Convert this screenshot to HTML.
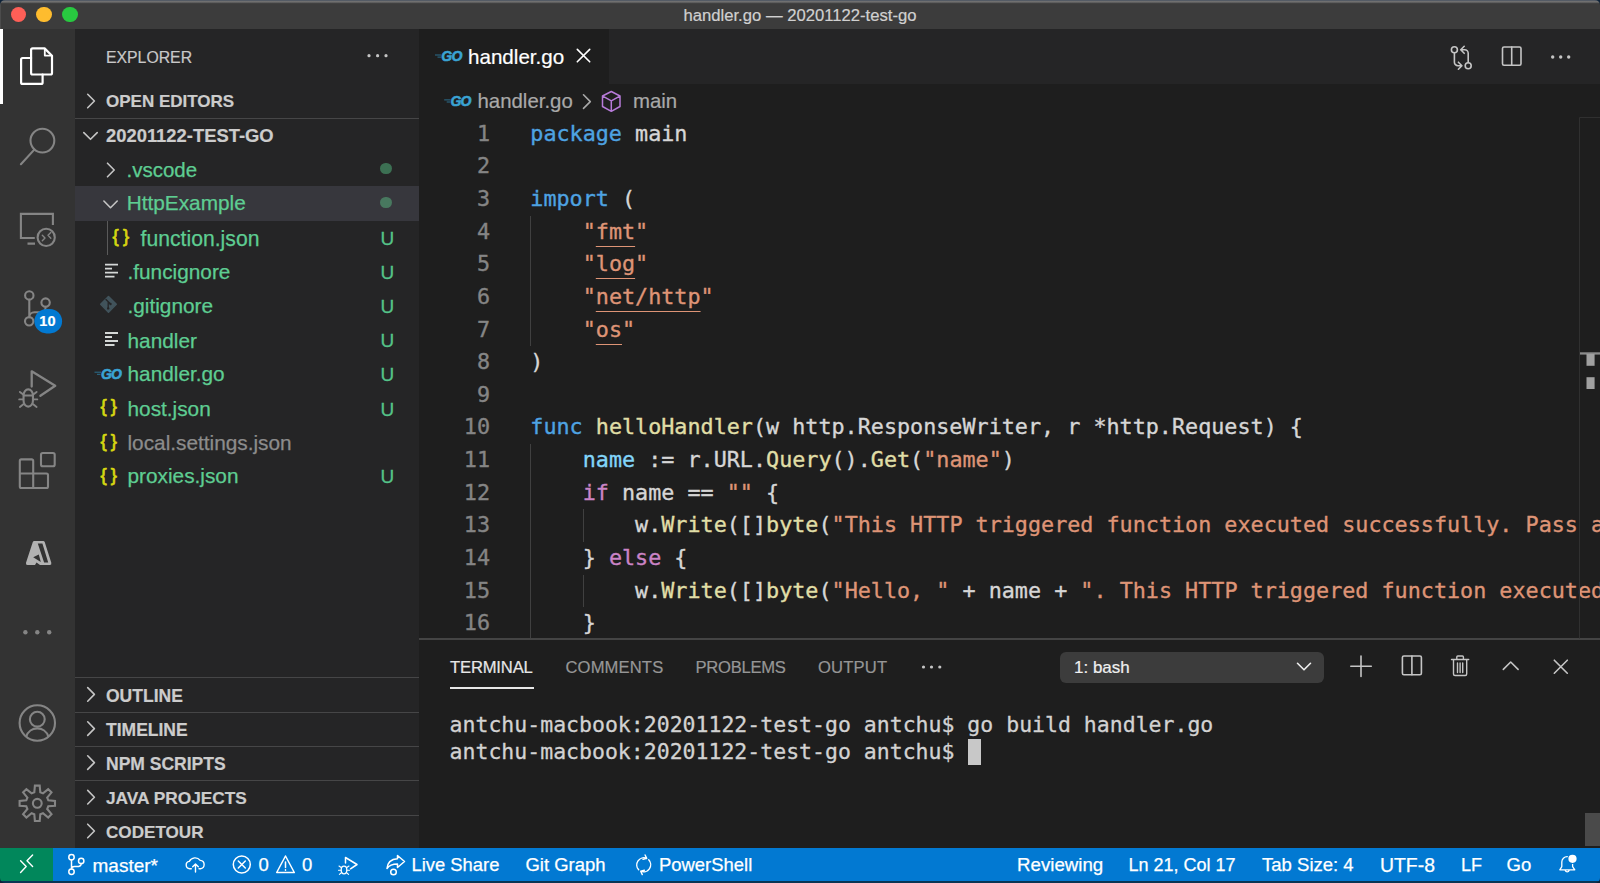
<!DOCTYPE html>
<html lang="en">
<head>
<meta charset="utf-8">
<title>handler.go — 20201122-test-go</title>
<style>
*{box-sizing:border-box;margin:0;padding:0}
html,body{width:1600px;height:883px;overflow:hidden;background:#1e1e1e}
body{position:relative;font-family:"Liberation Sans",sans-serif;color:#ccc;-webkit-font-smoothing:antialiased}
.abs{position:absolute}
.t{position:absolute;white-space:pre;line-height:1;-webkit-text-stroke:0.2px}
#titlebar{left:0;top:0;width:1600px;height:29px;background:linear-gradient(#545b65 0,#545b65 1px,#727272 1px,#6c6c6c 2.2px,#464646 3px,#3c3c3c 4px);border-left:1px solid #4c4c4c}
#title{left:0;width:1600px;text-align:center;top:7.6px;-webkit-text-stroke:0.2px;font-size:16.66px;color:#d0d0d0}
.light{position:absolute;top:6.8px;width:15.5px;height:15.5px;border-radius:50%}
#activity{left:0;top:29px;width:75px;height:819px;background:#333333}
#sidebar{left:75px;top:29px;width:344px;height:819px;background:#252526}
#tabs{left:419px;top:29px;width:1181px;height:54.5px;background:#252526}
#tab{left:419px;top:29px;width:190px;height:54.5px;background:#1e1e1e}
.sep{position:absolute;left:75px;width:344px;height:1.3px;background:#464647}
.sh{font-weight:bold;font-size:17.1px;color:#cccccc;left:106px}
.row{font-size:20.8px;color:#5ecd92;-webkit-text-stroke:0.25px}
.u{font-size:19px;color:#55c388;left:380.5px;-webkit-text-stroke:0.3px}
#status{left:0;top:848px;width:1600px;height:35px;background:#0279d2;border-bottom:2px solid #0a3554}
#remote{left:0;top:848px;width:53px;height:33px;background:#01875b}
.st{font-size:18.5px;color:#fff;top:855.5px;-webkit-text-stroke:0.25px}
.pt{font-size:16.6px;color:#969696;top:659.9px}
#code{left:0;top:117.7px;width:1600px;height:520.3px;overflow:hidden;font-family:"DejaVu Sans Mono","Liberation Mono",monospace;font-size:21.75px;line-height:32.64px;color:#d6d6d6;-webkit-text-stroke:0.35px}
#code div{position:absolute;white-space:pre;height:32.64px}
.ln{left:419px;width:71px;text-align:right;color:#858585}
.cl{left:530.3px}
.k{color:#4ea3e2}.s{color:#de9476}.f{color:#e0dea6}.v{color:#82d5f9}.c{color:#cb84c6}
.lk{text-decoration:underline;text-decoration-thickness:1.2px;text-underline-offset:6.5px}
.js{font-size:18.5px;color:#d6d611;letter-spacing:4.3px;-webkit-text-stroke:0.75px #d6d611}
.go{font-weight:bold;font-style:italic;font-size:14px;color:#3aa3d3;letter-spacing:-0.8px;-webkit-text-stroke:0.6px #3aa3d3}
.g{width:1px;background:#404040}
.term{font-family:"DejaVu Sans Mono","Liberation Mono",monospace;font-size:21.5px;color:#d2d2d2;left:449.6px;-webkit-text-stroke:0.3px}
</style>
</head>
<body>
<!-- title bar -->
<div id="titlebar" class="abs"></div>
<div class="light" style="left:10.5px;background:#fe5f57"></div>
<div class="light" style="left:36.3px;background:#febc2e"></div>
<div class="light" style="left:62.3px;background:#28c840"></div>
<div id="title" class="t">handler.go — 20201122-test-go</div>

<!-- activity bar / sidebar / editor backgrounds -->
<div id="activity" class="abs"></div>
<div class="abs" style="left:0;top:29px;width:3px;height:75px;background:#fff"></div>
<div id="sidebar" class="abs"></div>
<div id="tabs" class="abs"></div>
<div id="tab" class="abs"></div>

<!-- sidebar -->
<div class="t" style="left:106px;top:49.5px;font-size:15.8px;color:#c8c8c8">EXPLORER</div>
<div class="t sh" style="top:93px;font-size:17px">OPEN EDITORS</div>
<div class="sep" style="top:118px"></div>
<div class="t sh" style="top:126.6px;font-size:18.4px">20201122-TEST-GO</div>
<div class="abs" style="left:75px;top:186.4px;width:344px;height:34.4px;background:#37373d"></div>
<div class="abs" style="left:106.5px;top:221px;width:1px;height:33.6px;background:#5a5a5a"></div>

<div class="t row" style="left:126.5px;top:159.5px;font-size:20.5px">.vscode</div>
<div class="t row" style="left:126.7px;top:193.3px">HttpExample</div>
<div class="t row" style="left:140.5px;top:228.2px;font-size:21.2px">function.json</div>
<div class="t row" style="left:127.5px;top:261.8px">.funcignore</div>
<div class="t row" style="left:127.5px;top:295.7px">.gitignore</div>
<div class="t row" style="left:127.5px;top:330.5px">handler</div>
<div class="t row" style="left:127.5px;top:364.2px">handler.go</div>
<div class="t row" style="left:127.5px;top:398.8px">host.json</div>
<div class="t row" style="left:127.5px;top:432.9px;color:#8c8c8c">local.settings.json</div>
<div class="t row" style="left:127.5px;top:466.1px">proxies.json</div>

<div class="abs" style="left:380px;top:162.7px;width:11.5px;height:11.5px;border-radius:50%;background:#3c7053"></div>
<div class="abs" style="left:380px;top:196.5px;width:11.5px;height:11.5px;border-radius:50%;background:#48785f"></div>
<div class="t u" style="top:229.1px">U</div>
<div class="t u" style="top:262.7px">U</div>
<div class="t u" style="top:296.6px">U</div>
<div class="t u" style="top:331.4px">U</div>
<div class="t u" style="top:365.1px">U</div>
<div class="t u" style="top:399.7px">U</div>
<div class="t u" style="top:467px">U</div>

<div class="sep" style="top:677px"></div>
<div class="t sh" style="top:688px;font-size:17.5px">OUTLINE</div>
<div class="sep" style="top:711.5px"></div>
<div class="t sh" style="top:722px;font-size:17.5px">TIMELINE</div>
<div class="sep" style="top:746px"></div>
<div class="t sh" style="top:756.1px;font-size:17.5px">NPM SCRIPTS</div>
<div class="sep" style="top:780px"></div>
<div class="t sh" style="top:789.8px;font-size:17.3px">JAVA PROJECTS</div>
<div class="sep" style="top:814.5px"></div>
<div class="t sh" style="top:824px">CODETOUR</div>


<!-- file icons as text -->
<div class="t js" style="left:112.5px;top:226.6px">{}</div>
<div class="t js" style="left:100.4px;top:397.4px">{}</div>
<div class="t js" style="left:100.4px;top:431.8px">{}</div>
<div class="t js" style="left:100.4px;top:465.6px">{}</div>
<div class="t go" style="left:101px;top:366.6px">GO</div>
<div class="t go" style="left:441.3px;top:49.4px">GO</div>
<div class="t go" style="left:450.5px;top:94.3px">GO</div>
<div class="t" style="z-index:3;left:33.6px;top:314px;width:27.7px;text-align:center;font-size:14.5px;font-weight:bold;color:#fff">10</div>
<!-- tab + breadcrumbs -->
<div class="t" style="left:468px;top:46.5px;font-size:20.6px;color:#ffffff">handler.go</div>
<div class="t" style="left:477.5px;top:90.8px;font-size:20.4px;color:#a9a9a9">handler.go</div>
<div class="t" style="left:633px;top:90.8px;font-size:20.4px;color:#a9a9a9">main</div>

<!-- code -->
<div id="code" class="abs">
<div class="ln" style="top:0.0px">1</div><div class="cl" style="top:0.0px"><span class="k">package</span> main</div>
<div class="ln" style="top:32.64px">2</div><div class="cl" style="top:32.64px"></div>
<div class="ln" style="top:65.28px">3</div><div class="cl" style="top:65.28px"><span class="k">import</span> (</div>
<div class="ln" style="top:97.92px">4</div><div class="cl" style="top:97.92px">    <span class="s">"<span class="lk">fmt</span>"</span></div>
<div class="ln" style="top:130.56px">5</div><div class="cl" style="top:130.56px">    <span class="s">"<span class="lk">log</span>"</span></div>
<div class="ln" style="top:163.2px">6</div><div class="cl" style="top:163.2px">    <span class="s">"<span class="lk">net/http</span>"</span></div>
<div class="ln" style="top:195.84px">7</div><div class="cl" style="top:195.84px">    <span class="s">"<span class="lk">os</span>"</span></div>
<div class="ln" style="top:228.48px">8</div><div class="cl" style="top:228.48px">)</div>
<div class="ln" style="top:261.12px">9</div><div class="cl" style="top:261.12px"></div>
<div class="ln" style="top:293.76px">10</div><div class="cl" style="top:293.76px"><span class="k">func</span> <span class="f">helloHandler</span>(w http.ResponseWriter, r *http.Request) {</div>
<div class="ln" style="top:326.4px">11</div><div class="cl" style="top:326.4px">    <span class="v">name</span> := r.URL.<span class="f">Query</span>().<span class="f">Get</span>(<span class="s">"name"</span>)</div>
<div class="ln" style="top:359.04px">12</div><div class="cl" style="top:359.04px">    <span class="c">if</span> name == <span class="s">""</span> {</div>
<div class="ln" style="top:391.68px">13</div><div class="cl" style="top:391.68px">        w.<span class="f">Write</span>([]<span class="f">byte</span>(<span class="s">"This HTTP triggered function executed successfully. Pass a</span></div>
<div class="ln" style="top:424.32px">14</div><div class="cl" style="top:424.32px">    } <span class="c">else</span> {</div>
<div class="ln" style="top:456.96px">15</div><div class="cl" style="top:456.96px">        w.<span class="f">Write</span>([]<span class="f">byte</span>(<span class="s">"Hello, "</span> + name + <span class="s">". This HTTP triggered function executed</span></div>
<div class="ln" style="top:489.6px">16</div><div class="cl" style="top:489.6px">    }</div>

<div class="abs g" style="left:530px;top:97.92px;height:130.56px"></div>
<div class="abs g" style="left:530px;top:326.40px;height:200.84px"></div>
<div class="abs g" style="left:583px;top:391.68px;height:32.64px"></div>
<div class="abs g" style="left:583px;top:456.96px;height:32.64px"></div>
</div>

<!-- panel -->
<div class="abs" style="left:419px;top:638.2px;width:1181px;height:1.5px;background:#444444"></div>

<div class="t pt" style="left:450px;color:#e7e7e7;letter-spacing:-0.16px">TERMINAL</div>
<div class="abs" style="left:450px;top:687px;width:84px;height:1.5px;background:#e7e7e7"></div>
<div class="t pt" style="left:565.5px;letter-spacing:0.13px">COMMENTS</div>
<div class="t pt" style="left:695.5px;letter-spacing:-0.26px">PROBLEMS</div>
<div class="t pt" style="left:818px;letter-spacing:0.16px">OUTPUT</div>
<div class="abs" style="left:1060px;top:652px;width:264px;height:30.5px;background:#3c3c3c;border-radius:6px"></div>
<div class="t" style="left:1074px;top:658.5px;font-size:17px;color:#f0f0f0">1: bash</div>
<div class="t term" style="top:714.1px">antchu-macbook:20201122-test-go antchu$ go build handler.go</div>
<div class="t term" style="top:741px">antchu-macbook:20201122-test-go antchu$ </div>
<div class="abs" style="left:968px;top:739px;width:13px;height:26px;background:#c8c8c8"></div>
<div class="abs" style="left:1585px;top:813px;width:15px;height:33px;background:#4a4a4a"></div>

<!-- status bar -->
<div id="status" class="abs"></div>
<div id="remote" class="abs"></div>
<div class="t st" style="left:92.5px;font-size:19px">master*</div>
<div class="t st" style="left:258.5px">0</div>
<div class="t st" style="left:302px">0</div>
<div class="t st" style="left:411.5px;font-size:18.4px">Live Share</div>
<div class="t st" style="left:525.5px;font-size:18.45px">Git Graph</div>
<div class="t st" style="left:659px;font-size:18.45px">PowerShell</div>
<div class="t st" style="left:1017px;font-size:18.7px">Reviewing</div>
<div class="t st" style="left:1128.5px;font-size:18px">Ln 21, Col 17</div>
<div class="t st" style="left:1262px;font-size:18.55px">Tab Size: 4</div>
<div class="t st" style="left:1380px;font-size:19.4px">UTF-8</div>
<div class="t st" style="left:1461px;font-size:18px;top:855.9px">LF</div>
<div class="t st" style="left:1506.5px">Go</div>

<svg class="abs" id="icons" style="left:0;top:0" width="1600" height="883" viewBox="0 0 1600 883" fill="none" stroke-linecap="round" stroke-linejoin="round">
<g fill="#0e2238" stroke="none">
<path d="M0 0H5A5 5 0 0 0 0 5Z"/><path d="M1600 0H1595A5 5 0 0 1 1600 5Z"/>
<path d="M0 883H5A5 5 0 0 1 0 878Z"/><path d="M1600 883H1595A5 5 0 0 0 1600 878Z"/>
</g>
<!-- ACTIVITY BAR -->
<g stroke="#ffffff" stroke-width="2.2">
<path d="M32.6 48.4H44.6L52 55.8V73a1.5 1.5 0 0 1-1.5 1.5H32.6a1.5 1.5 0 0 1-1.5-1.5V49.9a1.5 1.5 0 0 1 1.5-1.5z"/>
<path d="M44.8 49V55.6H51.6" stroke-width="1.8"/>
<path d="M31.1 58H22.6a1.5 1.5 0 0 0-1.5 1.5V82.4a1.5 1.5 0 0 0 1.5 1.5H41.1a1.5 1.5 0 0 0 1.5-1.5V74.5"/>
</g>
<g stroke="#858585" stroke-width="2.1">
<circle cx="42.4" cy="140.6" r="11.9"/>
<path d="M34.3 149.6L20.9 164.2"/>
<!-- remote explorer -->
<path d="M52.9 225V213.9H20.9V238H34.8M27.500 243.600H35" stroke-linecap="butt" stroke-linejoin="miter"/>
<circle cx="46.2" cy="237.4" r="8.6"/>
<path d="M42.3 235.2L45 238L42.3 240.8M50.8 232.5L48 235.3L50.8 238.2" stroke-width="1.4"/>
<!-- source control -->
<circle cx="29.3" cy="295.4" r="4.2"/>
<circle cx="45.6" cy="302.6" r="4.2"/>
<circle cx="29.2" cy="321.3" r="4.2"/>
<path d="M29.3 299.8V317M45.6 306.800v.5a5 5 0 0 1-5 5h-6.300a5 5 0 0 0-5 5"/>
<!-- debug -->
<path d="M31.700 386.500V371.300L55.200 385.800L40.400 395.800" stroke-width="2.300"/>
<rect x="23.550" y="389.350" width="9.400" height="17.300" rx="4.700" ry="6"/>
<path d="M23.800 395.500H32.700M22.900 394.300L19.900 391.900M33.600 394.300L36.600 391.900M23 399.400H19.200M33.500 399.400H37.300M23.300 404.200L19.900 406.900M33.200 404.200L36.600 406.900" stroke-width="1.900"/>
<!-- extensions -->
<path d="M21.3 459.4H31.7a1.5 1.5 0 0 1 1.5 1.5V473.5H46.5a1.5 1.5 0 0 1 1.5 1.5V486.5a1.5 1.5 0 0 1-1.5 1.5H21.3a1.5 1.5 0 0 1-1.5-1.5V460.9a1.5 1.5 0 0 1 1.5-1.5zM19.8 473.5H33.2V488"/>
<rect x="41" y="453" width="13.7" height="13.2" rx="1.8"/>
<!-- account -->
<circle cx="37.3" cy="723" r="17.7"/>
<circle cx="37.3" cy="719.2" r="7.4"/>
<path d="M26.3 736.3a11.6 11.6 0 0 1 22 0"/>
<!-- gear -->
<path d="M34.3 792.3 L34.9 785.6 L39.7 785.6 L40.3 792.3 L43.0 793.4 L48.2 789.1 L51.5 792.4 L47.2 797.6 L48.3 800.3 L55.0 800.9 L55.0 805.7 L48.3 806.3 L47.2 809.0 L51.5 814.2 L48.2 817.5 L43.0 813.2 L40.3 814.3 L39.7 821.0 L34.9 821.0 L34.3 814.3 L31.6 813.2 L26.4 817.5 L23.1 814.2 L27.4 809.0 L26.3 806.3 L19.6 805.7 L19.6 800.9 L26.3 800.3 L27.4 797.6 L23.1 792.4 L26.4 789.1 L31.6 793.4Z" stroke-linejoin="miter"/>
<circle cx="37.3" cy="803.3" r="4.4"/>
</g>
<g fill="#858585" stroke="none">
<circle cx="25.4" cy="632.2" r="2.2"/><circle cx="37.3" cy="632.2" r="2.2"/><circle cx="49.2" cy="632.2" r="2.2"/>
</g>
<!-- azure -->
<path fill-rule="evenodd" d="M34.2 541H43.2Q44.3 541 44.7 542L51.3 562.8Q51.8 565 49.8 565H40L36.5 562.6L35 565H27.5Q25.500 565 26 562.8L32.8 542Q33.2 541 34.2 541ZM37.8 543.4H42.4L48.2 562.4H44.100ZM33.2 557.300L38.8 554.500L40.8 561.900Z" fill="#b2b2b2" stroke="none"/>
<!-- badge -->
<rect x="34.4" y="309" width="27.7" height="24.4" rx="12.2" fill="#0279d2" stroke="none"/>
<!-- SIDEBAR chevrons -->
<g stroke="#c5c5c5" stroke-width="1.6">
<path d="M87.7 94.3L94.4 101L87.7 107.8"/>
<path d="M83.8 132.6L90.5 139.3L97.2 132.6"/>
<path d="M107.5 163.2L114.2 170L107.5 176.8"/>
<path d="M103.9 201L110.5 207.7L117.2 201"/>
<path d="M87.7 687.6L94.4 694.4L87.7 701.2"/>
<path d="M87.7 721.8L94.4 728.6L87.7 735.4"/>
<path d="M87.7 755.8L94.4 762.6L87.7 769.4"/>
<path d="M87.7 790.4L94.4 797.2L87.7 804"/>
<path d="M87.7 824.2L94.4 831L87.7 837.8"/>
</g>
<g fill="#c5c5c5" stroke="none">
<circle cx="369" cy="55.7" r="1.6"/><circle cx="377.6" cy="55.7" r="1.6"/><circle cx="386" cy="55.7" r="1.6"/>
<circle cx="1552.7" cy="57" r="1.7"/><circle cx="1560.7" cy="57" r="1.7"/><circle cx="1568.7" cy="57" r="1.7"/>
<circle cx="923.5" cy="667" r="1.6"/><circle cx="931.5" cy="667" r="1.6"/><circle cx="939.8" cy="667" r="1.6"/>
</g>
<!-- text-lines file icons -->
<g stroke="#d4d7d6" stroke-width="1.8" stroke-linecap="butt">
<path d="M105 264.6H118M105 268.6H112M105 272.6H118M105 276.6H114.5"/>
<path d="M105 333H118M105 337H112M105 341H118M105 345H114.5"/>
</g>
<!-- git icon -->
<g>
<path d="M108.500 296.500L116.300 304.300L108.500 312.100L100.700 304.300Z" fill="#41535b" stroke="#41535b" stroke-width="1.500"/>
<path d="M106 299.5L109.8 303.3M108.2 301.5V308.3" stroke="#252526" stroke-width="1.3"/>
<circle cx="108.2" cy="308.4" r="1.2" fill="#252526"/><circle cx="110.5" cy="304" r="1.2" fill="#252526"/>
</g>
<g stroke="#2b6f8e" stroke-width="1" stroke-linecap="butt">
<path d="M94.5 372.2H101M97 374.3H100.500"/>
<path d="M435 55H441.500M437.500 57.100H441"/>
<path d="M444.200 99.900H450.700M446.700 102H450.200"/>
</g>
<!-- TAB BAR icons -->
<g stroke="#c5c5c5" stroke-width="1.6">
<path d="M577.3 49.4L589.7 61.8M589.7 49.4L577.3 61.8" stroke="#ffffff"/>
<path d="M583.5 94.8L590.3 101.6L583.5 108.4" stroke="#a9a9a9"/>
<!-- compare changes -->
<circle cx="1454.4" cy="49.8" r="3"/>
<circle cx="1468.2" cy="65.7" r="3"/>
<path d="M1454.4 53V62.2a3.5 3.5 0 0 0 3.5 3.5H1461.6M1458.4 62.2L1461.9 65.7L1458.4 69.2"/>
<path d="M1468.2 62.5V53.3a3.5 3.5 0 0 0-3.5-3.5H1461M1464.2 46.3L1460.7 49.8L1464.2 53.3"/>
<!-- split -->
<rect x="1502.5" y="47" width="18.5" height="18.2" rx="1.5"/>
<path d="M1511.7 47V65.2"/>
<!-- panel icons -->
<path d="M1297.5 663.3L1304 669.8L1310.5 663.3" stroke="#f0f0f0"/>
<path d="M1361 656V676.5M1350.8 666.2H1371.3"/>
<rect x="1402.4" y="656" width="19" height="18.8" rx="1.5"/>
<path d="M1411.9 656V674.8"/>
<path d="M1503.3 669.4L1510.7 662L1518.1 669.4"/>
<path d="M1554.3 660.2L1567.3 673.2M1567.3 660.2L1554.3 673.2"/>
<!-- trash -->
<path d="M1451.5 659.5H1468.7M1456.8 659.2V657a1 1 0 0 1 1-1H1462.4a1 1 0 0 1 1 1V659.2M1453.5 660V674a1.5 1.5 0 0 0 1.5 1.5H1465.2a1.5 1.5 0 0 0 1.5-1.5V660M1457.5 663V672.5M1460.1 663V672.5M1462.7 663V672.5" stroke-width="1.4"/>
</g>
<!-- cube -->
<g stroke="#b77bd9" stroke-width="1.5">
<path d="M611.3 91.5L620 96V106.5L611.3 111.3L602.5 106.5V96ZM602.8 96.2L611.3 100.8L619.8 96.2M611.3 100.8V111"/>
</g>
<!-- minimap / overview ruler -->
<path d="M1600 117.5H1579.5V638" stroke="#303030" stroke-width="1"/>
<rect x="1580" y="352.3" width="20" height="2.3" fill="#8c8c8c" stroke="none"/>
<rect x="1586.5" y="354" width="8.1" height="11.8" fill="#a0a0a0" stroke="none"/>
<rect x="1586.5" y="377.2" width="8.1" height="11.8" fill="#a0a0a0" stroke="none"/>
<!-- STATUS BAR icons -->
<g stroke="#ffffff" stroke-width="1.5">
<path d="M20.600 860.800L26.200 866.600L20.600 872.400M32.600 855L27 860.800L32.600 866.600" stroke-width="1.400"/>
<!-- branch -->
<circle cx="71.5" cy="857.2" r="2.7"/><circle cx="71.5" cy="871.7" r="2.7"/><circle cx="81.2" cy="860.9" r="2.7"/>
<path d="M71.5 860V868.9M81.2 863.700c0 2.900-2 2.900-4.500 2.900H74.500c-1.800 0-3 .8-3 2.300"/>
<!-- cloud upload -->
<path d="M191.300 868.700h-1.500a3.700 3.700 0 0 1-.5-7.350a6.500 6.500 0 0 1 10.900-1a4.200 4.200 0 0 1 .3 8.350h-1.500M195.500 872V864.200M192.700 866.800L195.500 864L198.300 866.800" stroke-width="1.400"/>
<!-- error -->
<circle cx="241.8" cy="864.5" r="8.5"/>
<path d="M238.300 861L245.300 868M245.300 861L238.300 868"/>
<!-- warning -->
<path d="M285.500 856L294.300 872.500H276.700Z"/>
<path d="M285.500 862V867.500M285.500 869.800V870.200"/>
<!-- debug small -->
<path d="M345.500 863V857.500L357 864.500L350.500 868.800" />
<ellipse cx="344" cy="870" rx="2.800" ry="3.800" stroke-width="1.300"/>
<path d="M341.200 867.500L339 866M346.800 867.500L349 866M341 870.300H338.500M347 870.300H349.500M341.400 872.800L339.400 874.400M346.600 872.800L348.600 874.400" stroke-width="1.100"/>
<!-- live share -->
<path d="M397.500 855.500L404.500 861.500L397.500 867.500V864c-5 0-8.500 1.500-10.500 4.500c.5-5.500 4-9.500 10.500-9.800Z"/>
<circle cx="393.500" cy="872" r="2.800"/>
<!-- sync -->
<path d="M638.700 869.800A7.100 7.100 0 0 1 646.700 858.400M645.100 855L646.700 858.400L643 859.400M648.700 859.800A7.100 7.100 0 0 1 640.700 871.200M642.300 874.600L640.700 871.200L644.400 870.200" stroke-width="1.400"/>
<!-- bell -->
<path d="M1559.800 869.800H1574.800L1572.600 866.600V862a5.400 5.400 0 0 0-10.800 0V866.600ZM1565.300 870.500a2 2 0 0 0 3.800 0" stroke-width="1.300"/>
</g>
<circle cx="1572.500" cy="858.800" r="5.200" fill="#0279d2" stroke="none"/><circle cx="1572.500" cy="858.800" r="4.100" fill="#ffffff" stroke="none"/>
</svg>
</body>
</html>
